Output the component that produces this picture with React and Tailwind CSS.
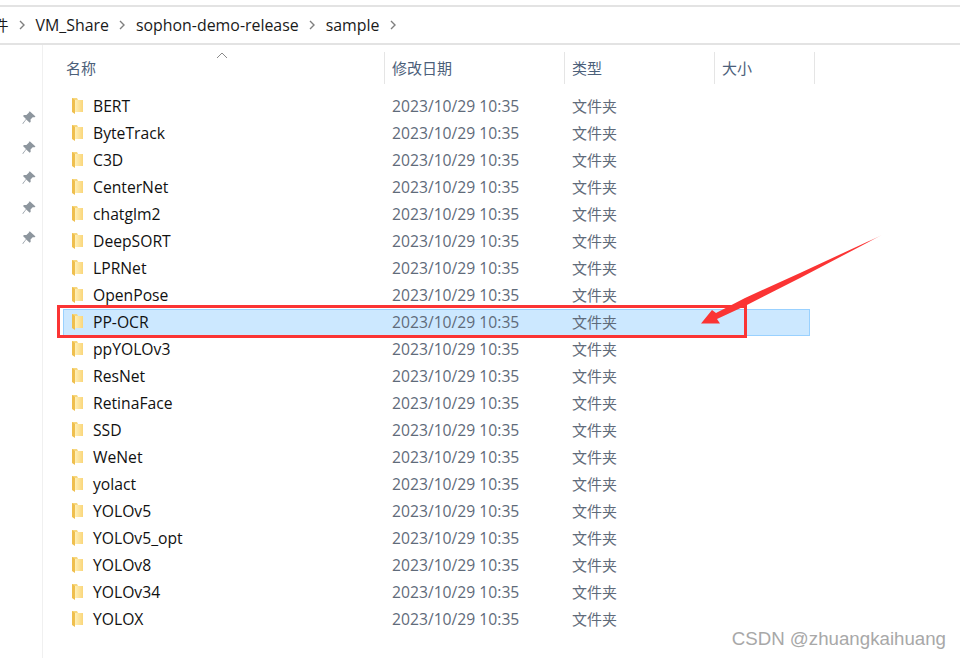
import React from 'react';

const folders = [
  'BERT', 'ByteTrack', 'C3D', 'CenterNet', 'chatglm2', 'DeepSORT', 'LPRNet', 'OpenPose',
  'PP-OCR', 'ppYOLOv3', 'ResNet', 'RetinaFace', 'SSD', 'WeNet', 'yolact', 'YOLOv5',
  'YOLOv5_opt', 'YOLOv8', 'YOLOv34', 'YOLOX',
];

function Chevron() {
  return (
    <svg width="8" height="10" viewBox="0 0 8 10" className="shrink-0">
      <path d="M2 1l4 4-4 4" fill="none" stroke="#7f7f7f" strokeWidth="1.4" />
    </svg>
  );
}

function FolderIcon() {
  return (
    <svg width="13" height="18" viewBox="0 0 13 18" className="shrink-0">
      <defs>
        <linearGradient id="folderFace" x1="0" y1="0" x2="1" y2="0">
          <stop offset="0" stopColor="#fff0b8" />
          <stop offset="1" stopColor="#fad67a" />
        </linearGradient>
      </defs>
      <path d="M1 1h5l1 2h5v12H1z" fill="#f7d77e" />
      <path d="M4 3h8v12H4z" fill="url(#folderFace)" />
      <path d="M1 1l3 2v14l-3-2z" fill="#efbf4e" />
    </svg>
  );
}

function PinIcon() {
  return (
    <svg width="14" height="14" viewBox="0 0 14 14">
      <path d="M8 0.5l5.5 5-1.5 1-1-.5-2.5 2.5.2 2.3-1 1L4.2 8.5 1 13l-.6-.5 3.6-4.6-3-3 1-1 2.4.2L7 1.6l-.2-.8z" fill="#8d969e" />
    </svg>
  );
}

function Row({ name }) {
  const selected = name === 'PP-OCR';
  return (
    <div className={`flex h-[27px] items-center border ${selected ? 'border-[#99d1ff] bg-[#cce8ff]' : 'border-transparent'}`}>
      <div className="flex w-[328px] items-center pl-[7px]">
        <FolderIcon />
        <span className="ml-[9px] pt-[1px] text-[15.7px] text-[#111111]">{name}</span>
      </div>
      <span className="w-[180px] pt-[1px] text-[15.7px] text-[#5f6b7a]">2023/10/29 10:35</span>
      <span className="text-[15px] text-[#5f6b7a]">文件夹</span>
    </div>
  );
}

function HeaderCell({ width, children }) {
  return (
    <div className={`flex h-[32px] items-center border-r border-[#e5e5e5] pl-[7px] text-[15px] text-[#4c607a] ${width}`}>
      {children}
    </div>
  );
}

export default function App() {
  return (
    <div className="relative h-[658px] w-[960px] overflow-hidden bg-white font-['Open_Sans','Noto_Sans_CJK_SC',sans-serif]">
      <div className="h-[7px] border-b-2 border-[#e3e3e3]" />

      {/* breadcrumb */}
      <div className="flex h-[38px] items-center gap-[9.5px] border-b-2 border-[#e3e3e3] text-[15.9px] text-[#1a1a1a]">
        <span className="ml-[-6.5px] text-[15px]">件</span>
        <Chevron />
        <span className="pt-[2px]">VM_Share</span>
        <Chevron />
        <span className="pt-[2px]">sophon-demo-release</span>
        <Chevron />
        <span className="pt-[2px]">sample</span>
        <Chevron />
      </div>

      <div className="flex">
        {/* quick access pins */}
        <div className="flex h-[613px] w-[43px] flex-col items-center gap-[16px] border-r border-[#f0f0f0] pt-[66px] pl-[16px]">
          <PinIcon />
          <PinIcon />
          <PinIcon />
          <PinIcon />
          <PinIcon />
        </div>

        <div className="relative pl-[20px] pt-[7px]">
          <svg width="12" height="7" viewBox="0 0 12 7" className="absolute left-[173px] top-[7px]">
            <path d="M1 6l5-5 5 5" fill="none" stroke="#8a8a8a" strokeWidth="1" />
          </svg>
          <div className="flex">
            <div className="flex h-[32px] w-[322px] items-center border-r border-[#e5e5e5] pl-[3px] text-[15px] text-[#4c607a]">名称</div>
            <HeaderCell width="w-[180px]">修改日期</HeaderCell>
            <HeaderCell width="w-[150px]">类型</HeaderCell>
            <HeaderCell width="w-[100px]">大小</HeaderCell>
          </div>
          <div className="mt-[9px] w-[747px]">
            {folders.map((name) => (
              <Row key={name} name={name} />
            ))}
          </div>
        </div>
      </div>

      {/* annotation drawn on the screenshot */}
      <div className="absolute left-[57px] top-[305px] h-[33px] w-[690px] border-[3px] border-[#fb3434]" />
      <svg width="960" height="658" className="absolute left-0 top-0" viewBox="0 0 960 658">
        <defs>
          <linearGradient id="arrowFade" x1="882" y1="235" x2="700" y2="324" gradientUnits="userSpaceOnUse">
            <stop offset="0" stopColor="#fb3434" stopOpacity="0.2" />
            <stop offset="0.08" stopColor="#fb3434" />
          </linearGradient>
        </defs>
        <path d="M882 235L800 273 745 298 716 313 712 310 701 323.5 720 323.5 717 319 745 306 800 278z" fill="url(#arrowFade)" />
      </svg>

      <div className="absolute right-[14px] top-[627px] font-['Liberation_Sans',sans-serif] text-[18.7px] leading-[24px] text-[#a8a8a8]">
        CSDN @zhuangkaihuang
      </div>
    </div>
  );
}
